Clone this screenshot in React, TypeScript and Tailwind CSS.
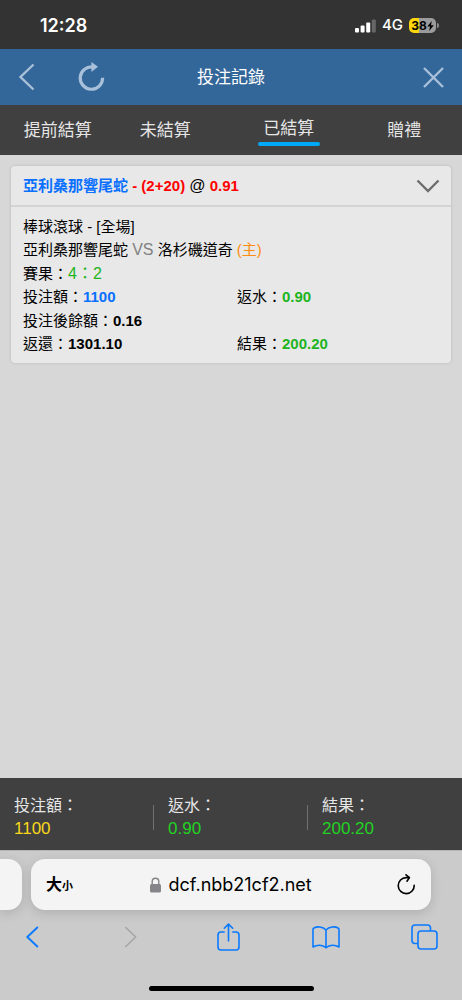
import type { ReactNode } from "react"

const tabs = [
  { id: "early", label: "提前結算", className: "" },
  { id: "open", label: "未結算", className: "pr-4" },
  { id: "settled", label: "已結算", className: "" },
  { id: "gift", label: "贈禮", className: "" },
]

const totals = [
  { label: "投注額：", value: "1100", color: "text-[#f8d81c]" },
  { label: "返水：", value: "0.90", color: "text-[#22d322]" },
  { label: "結果：", value: "200.20", color: "text-[#22d322]" },
]

function StatusBar() {
  return (
    <div className="flex h-[49px] items-center justify-between bg-[#333333] pt-0.5 pr-[23px] pl-10 font-['Inter',sans-serif] text-white">
      <span className="text-lg font-semibold">12:28</span>
      <div className="flex items-center">
        <svg width="21" height="14" viewBox="0 0 21 14" fill="currentColor" aria-hidden="true">
          <rect x="0" y="9" width="4" height="4.5" rx="1" />
          <rect x="5.6" y="6.5" width="4" height="7" rx="1" />
          <rect x="11.2" y="3.5" width="4" height="10" rx="1" />
          <rect x="16.8" y="0.5" width="4" height="13" rx="1" opacity="0.25" />
        </svg>
        <span className="ml-1.5 text-[15px] font-medium">4G</span>
        <div className="ml-1.5 flex h-[15px] w-[27px] items-center justify-center rounded-[5px] bg-linear-to-r from-[#ffd60a] from-38% to-[#9b9b9b] to-38% text-xs font-bold text-black">
          <span>38</span>
          <svg width="7" height="10" viewBox="0 0 7 10" fill="currentColor" aria-hidden="true">
            <path d="M4.8 0 0.3 5.6H3L2.2 10 6.8 4.2H4Z" />
          </svg>
        </div>
        <div className="ml-px h-[5px] w-[2px] rounded-r-full bg-[#8a8a8a]" />
      </div>
    </div>
  )
}

function Header() {
  return (
    <header className="grid h-14 grid-cols-[1fr_auto_1fr] items-center bg-[#336699] px-[18px]">
      <div className="flex items-center gap-[42px] text-[#a8c0d9]">
        <button type="button" aria-label="返回">
          <svg width="17" height="28" viewBox="0 0 17 28" fill="none" stroke="currentColor" strokeWidth="2.4">
            <path d="M15.5 1.5 2.5 14l13 12.5" />
          </svg>
        </button>
        <button type="button" aria-label="重新整理">
          <svg width="28" height="30" viewBox="0 0 28 30" fill="none" stroke="currentColor" strokeWidth="3.2">
            <path d="M25.6 15.8A11.2 11.2 0 1 1 16.2 5" />
            <path d="M14.4 0v10L21 4.8Z" fill="currentColor" stroke="none" />
          </svg>
        </button>
      </div>
      <h1 className="pt-0.5 text-[17px] text-white">投注記錄</h1>
      <button type="button" aria-label="關閉" className="justify-self-end text-[#a8c0d9]">
        <svg width="21" height="21" viewBox="0 0 21 21" fill="none" stroke="currentColor" strokeWidth="2.4">
          <path d="m1 1 19 19M20 1 1 20" />
        </svg>
      </button>
    </header>
  )
}

function Tabs() {
  return (
    <nav className="grid h-[50px] grid-cols-4 bg-[#404040] pt-0.5 text-[17px] text-[#e6e6e6]">
      {tabs.map((tab) => (
        <button key={tab.id} type="button" className={`flex flex-col items-center justify-center ${tab.className}`}>
          {tab.id === "settled" ? (
            <>
              <span>{tab.label}</span>
              <span className="h-1 w-[62px] rounded-full bg-[#00a8f8]" />
            </>
          ) : (
            tab.label
          )}
        </button>
      ))}
    </nav>
  )
}

function Row({ children }: { children: ReactNode }) {
  return <div className="grid grid-cols-2">{children}</div>
}

function BetCard() {
  return (
    <article className="rounded bg-[#e8e8e8] text-[15px] leading-[23px] text-black shadow-[0_0_3px_rgba(0,0,0,0.15)]">
      <div className="flex h-[41px] items-center justify-between border-b-2 border-[#d4d4d4] pr-[11px] pl-3">
        <h2 className="font-bold text-[#ff0000]">
          <span className="text-[#0a70ff]">亞利桑那響尾蛇</span> - (2+20){" "}
          <span className="text-base font-normal text-black">@</span> 0.91
        </h2>
        <button type="button" aria-label="收合">
          <svg width="24" height="14" viewBox="0 0 24 14" fill="none" stroke="#6e6e6e" strokeWidth="2.4">
            <path d="M1.5 1.5 12 12 22.5 1.5" />
          </svg>
        </button>
      </div>
      <div className="space-y-px px-3 pt-2 pb-2">
        <div>
          <p>棒球滾球 - [全場]</p>
          <p>
            亞利桑那響尾蛇 <span className="text-base leading-[23px] text-[#808080]">VS</span> 洛杉磯道奇{" "}
            <span className="text-[#ff8c10]">(主)</span>
          </p>
        </div>
        <div>
          <p>
            賽果：<span className="text-base leading-[23px] text-[#1eb41e]">4：2</span>
          </p>
          <Row>
            <p>
              投注額：<b className="text-[#0a70ff]">1100</b>
            </p>
            <p className="pl-1.5">
              返水：<b className="text-[#1eb41e]">0.90</b>
            </p>
          </Row>
        </div>
        <div>
          <p>
            投注後餘額：<b>0.16</b>
          </p>
          <Row>
            <p>
              返還：<b>1301.10</b>
            </p>
            <p className="pl-1.5">
              結果：<b className="text-[#1eb41e]">200.20</b>
            </p>
          </Row>
        </div>
      </div>
    </article>
  )
}

function Totals() {
  return (
    <footer className="grid h-[72px] grid-cols-3 items-center bg-[#404040] pt-1.5 text-base leading-[23px] text-[#e6e6e6]">
      {totals.map((item) => (
        <div key={item.label} className="flex items-center justify-between">
          <div className="pl-3.5">
            <p>{item.label}</p>
            <p className={`text-[17px] leading-[23px] ${item.color}`}>{item.value}</p>
          </div>
          {item.label !== "結果：" && <div className="h-[25px] w-px bg-[#707070]" />}
        </div>
      ))}
    </footer>
  )
}

function BrowserBar() {
  return (
    <div className="border-t border-[#b4b4b4] bg-[#cbcbcb] pt-2 text-[#0a7aff]">
      <div className="flex gap-[9px] pr-[31px]">
        <div className="h-[51px] w-[22px] rounded-r-[14px] bg-[#f4f4f4] shadow-[0_3px_12px_rgba(0,0,0,0.14)]" />
        <div className="flex h-[51px] flex-1 items-center justify-between rounded-[14px] bg-[#f4f4f4] px-[15px] text-black shadow-[0_3px_12px_rgba(0,0,0,0.14)]">
          <button type="button" className="text-base font-bold">
            大<span className="text-[11px]">小</span>
          </button>
          <label className="flex items-center gap-2">
            <svg width="11" height="16" viewBox="0 0 11 16" fill="none" aria-hidden="true">
              <path d="M2.2 8V4.5a3.3 3.3 0 0 1 6.6 0V8" stroke="#858589" strokeWidth="1.4" />
              <rect y="7" width="11" height="8.5" rx="1.6" fill="#858589" />
            </svg>
            <input
              type="text"
              aria-label="網址"
              defaultValue="dcf.nbb21cf2.net"
              className="w-[152px] bg-transparent font-['Inter',sans-serif] text-lg outline-none"
            />
          </label>
          <button type="button" aria-label="重新載入">
            <svg width="19" height="22" viewBox="0 0 19 22" fill="none" stroke="currentColor" strokeWidth="1.6" strokeLinecap="round" strokeLinejoin="round">
              <path d="M17.2 11.2A8 8 0 1 1 9.2 3.6h3" />
              <path d="m9 0.8 3.4 2.8L10 7.2" />
            </svg>
          </button>
        </div>
      </div>
      <div className="flex h-[54px] items-center justify-between pr-6 pl-[18px]">
        <button type="button" aria-label="上一頁" className="flex w-7 justify-center">
          <svg width="13" height="22" viewBox="0 0 13 22" fill="none" stroke="currentColor" strokeWidth="1.9" strokeLinecap="round" strokeLinejoin="round">
            <path d="M11.3 1.5 1.3 11l10 9.5" />
          </svg>
        </button>
        <button type="button" aria-label="下一頁" disabled className="flex w-7 justify-center text-[#a6a6a6]">
          <svg width="13" height="22" viewBox="0 0 13 22" fill="none" stroke="currentColor" strokeWidth="1.6" strokeLinecap="round" strokeLinejoin="round">
            <path d="m1.7 1.5 10 9.5-10 9.5" />
          </svg>
        </button>
        <button type="button" aria-label="分享" className="flex w-7 justify-center">
          <svg width="23" height="28" viewBox="0 0 23 28" fill="none" stroke="currentColor" strokeWidth="1.6" strokeLinecap="round" strokeLinejoin="round">
            <path d="M7.2 9H4a3 3 0 0 0-3 3v12a3 3 0 0 0 3 3h15a3 3 0 0 0 3-3V12a3 3 0 0 0-3-3h-3.2" />
            <path d="M11.5 18V1.2M7.3 5.2l4.2-4.1 4.2 4.1" />
          </svg>
        </button>
        <button type="button" aria-label="書籤" className="flex w-7 justify-center">
          <svg width="28" height="23" viewBox="0 0 28 23" fill="none" stroke="currentColor" strokeWidth="1.6" strokeLinecap="round" strokeLinejoin="round">
            <path d="M14 4C11 .4 5 .2 1.600 2.200Q1 2.600 1 3.500V21c4-2.500 9.600-2.600 13 .8 3.400-3.400 9-3.300 13-.8V3.500q0-.9-.6-1.300C23 .2 17 .4 14 4v17.500" />
          </svg>
        </button>
        <button type="button" aria-label="分頁" className="flex w-7 justify-center">
          <svg width="27" height="26" viewBox="0 0 27 26" fill="none" stroke="currentColor" strokeWidth="1.6">
            <rect x="7" y="7" width="19" height="18" rx="3" />
            <path d="M7 19.500H4a3 3 0 0 1-3-3V4a3 3 0 0 1 3-3h12.500a3 3 0 0 1 3 3v3" />
          </svg>
        </button>
      </div>
      <div className="flex justify-center pt-[22px] pb-[9px]">
        <div className="h-[5px] w-[165px] rounded-full bg-black" />
      </div>
    </div>
  )
}

export default function App() {
  return (
    <div lang="zh-Hant" className="flex min-h-screen flex-col bg-[#d7d7d7] font-['Liberation_Sans','Noto_Sans_CJK_TC',sans-serif]">
      <StatusBar />
      <Header />
      <Tabs />
      <main className="flex-1 px-[11px] pt-[11px]">
        <BetCard />
      </main>
      <Totals />
      <BrowserBar />
    </div>
  )
}
